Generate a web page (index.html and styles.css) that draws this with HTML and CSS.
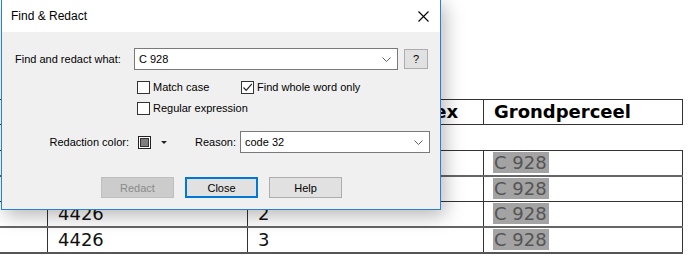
FILE: index.html
```html
<!DOCTYPE html>
<html>
<head>
<meta charset="utf-8">
<link rel="stylesheet" href="styles.css">
</head>
<body>
<div class="doc">
  <table class="tbl hdr">
    <colgroup><col class="c1"><col class="c2"><col class="c3"><col class="c4"></colgroup>
    <tr><th></th><th></th><th class="idx">Huisnummer-index</th><th>Grondperceel</th></tr>
  </table>
  <table class="tbl data">
    <colgroup><col class="c1"><col class="c2"><col class="c3"><col class="c4"></colgroup>
    <tr><td></td><td>4426</td><td>0</td><td><span class="red">C 928</span></td></tr>
    <tr><td></td><td>4426</td><td>1</td><td><span class="red">C 928</span></td></tr>
    <tr><td></td><td>4426</td><td>2</td><td><span class="red">C 928</span></td></tr>
    <tr><td></td><td>4426</td><td>3</td><td><span class="red">C 928</span></td></tr>
  </table>
</div>

<div class="dialog">
  <div class="titlebar">
    <span class="title">Find &amp; Redact</span>
    <svg class="close" width="11" height="11" viewBox="0 0 11 11"><path d="M0.5 0.5L10.5 10.5M10.5 0.5L0.5 10.5" stroke="#000" stroke-width="1.1" fill="none"/></svg>
  </div>
  <div class="body">
    <div class="row r1">
      <span class="lbl1">Find and redact what:</span>
      <div class="combo c-find"><span>C 928</span><svg class="chev" width="9" height="5" viewBox="0 0 9 5"><path d="M0.5 0.5L4.5 4.5L8.5 0.5" stroke="#606060" fill="none"/></svg></div>
      <div class="qbtn">?</div>
    </div>
    <div class="row r2">
      <label class="chk w1"><span class="box"></span>Match case</label>
      <label class="chk"><span class="box"><svg width="11" height="11" viewBox="0 0 11 11"><path d="M1.5 5.5L4.2 8.3L9.8 1.8" stroke="#222" stroke-width="1.2" fill="none"/></svg></span>Find whole word only</label>
    </div>
    <div class="row r3">
      <label class="chk"><span class="box"></span>Regular expression</label>
    </div>
    <div class="row r4">
      <span class="lbl2">Redaction color:</span>
      <span class="swatch"><span class="swin"></span></span>
      <span class="arrow"></span>
      <span class="lbl3">Reason:</span>
      <div class="combo c-reason"><span>code 32</span><svg class="chev" width="9" height="5" viewBox="0 0 9 5"><path d="M0.5 0.5L4.5 4.5L8.5 0.5" stroke="#606060" fill="none"/></svg></div>
    </div>
    <div class="row r5">
      <div class="btn dis">Redact</div>
      <div class="btn def">Close</div>
      <div class="btn">Help</div>
    </div>
  </div>
</div>
</body>
</html>
```
FILE: styles.css
```css
html, body { margin: 0; padding: 0; }
body {
  width: 690px;
  height: 256px;
  overflow: hidden;
  background: #fff;
  position: relative;
  font-family: "DejaVu Sans", sans-serif;
}
.doc { padding-top: 99px; margin-left: -53px; }
.tbl {
  border-collapse: collapse;
  table-layout: fixed;
  width: 735px;
}
.c1 { width: 100px; }
.c2 { width: 200px; }
.c3 { width: 236px; }
.c4 { width: 199px; }
.tbl th, .tbl td {
  border: 1px solid #333;
  height: 24px;
  padding: 0 0 0 10px;
  text-align: left;
  font-size: 18px;
  line-height: 22px;
  white-space: nowrap;
  overflow: hidden;
  vertical-align: middle;
  color: #111;
}
.tbl th { font-weight: bold; color: #000; }
.tbl th.idx { padding-left: 18px; }
.data { margin-top: 25px; }
.data tr:nth-child(2) td, .data tr:nth-child(4) td { border-top: 2px solid #666; }
.data tr:last-child td { border-bottom: 2px solid #555; }
.red {
  background: #a3a3a3;
  color: #555;
  padding: 0 2px 0 1px;
  margin-left: -1px;
  display: inline-block;
  line-height: 21px;
}

.dialog {
  position: absolute;
  left: 1px;
  top: -1px;
  width: 438px;
  height: 209px;
  border: 1px solid #2b7fd4;
  background: #f0f0f0;
  box-shadow: 4px 6px 18px rgba(0,0,0,0.28);
  font-family: "Liberation Sans", Arial, sans-serif;
  font-size: 11px;
  color: #000;
}
.titlebar {
  height: 32px;
  background: #fff;
  display: flex;
  align-items: center;
  justify-content: space-between;
  padding: 0 11px 0 9px;
}
.title { font-size: 12px; }
.body { padding: 16px 0 0 0; }
.row { display: flex; align-items: center; }
.r1 { height: 22px; padding-left: 13px; }
.lbl1 { width: 119px; }
.combo {
  box-sizing: border-box;
  height: 22px;
  background: #fff;
  border: 1px solid #7a7a7a;
  display: flex;
  align-items: center;
  justify-content: space-between;
  padding: 0 6px 0 4px;
}
.c-find { width: 264px; }
.qbtn {
  box-sizing: border-box;
  margin-left: 6px;
  width: 24px;
  height: 20px;
  background: #e1e1e1;
  border: 1px solid #adadad;
  display: flex;
  align-items: center;
  justify-content: center;
  font-size: 11px;
}
.r2 { margin-top: 10px; padding-left: 135px; height: 14px; }
.r3 { margin-top: 7px; padding-left: 135px; height: 14px; }
.chk { display: flex; align-items: center; }
.w1 { width: 104px; }
.box {
  box-sizing: border-box;
  width: 13px;
  height: 13px;
  border: 1px solid #333;
  background: #fff;
  margin-right: 3px;
  display: flex;
  align-items: center;
  justify-content: center;
}
.r4 { margin-top: 16px; height: 22px; }
.lbl2 { width: 127px; text-align: right; }
.swatch {
  box-sizing: border-box;
  margin-left: 9px;
  width: 13px;
  height: 13px;
  border: 1px solid #222;
  background: #fff;
  padding: 1px;
  display: flex;
}
.swin { flex: 1; background: #7f7f7f; border: 1px solid #333; }
.arrow {
  margin-left: 10px;
  width: 0;
  height: 0;
  border-left: 3px solid transparent;
  border-right: 3px solid transparent;
  border-top: 3px solid #222;
}
.lbl3 { margin-left: 28px; width: 45px; }
.c-reason { width: 190px; }
.r5 { margin-top: 24px; padding-left: 99px; gap: 11px; }
.btn {
  box-sizing: border-box;
  width: 73px;
  height: 21px;
  background: #e1e1e1;
  border: 1px solid #adadad;
  display: flex;
  align-items: center;
  justify-content: center;
}
.btn.dis { background: #cccccc; border-color: #bfbfbf; color: #8a8a8a; }
.btn.def { border: 2px solid #0078d7; }
```
